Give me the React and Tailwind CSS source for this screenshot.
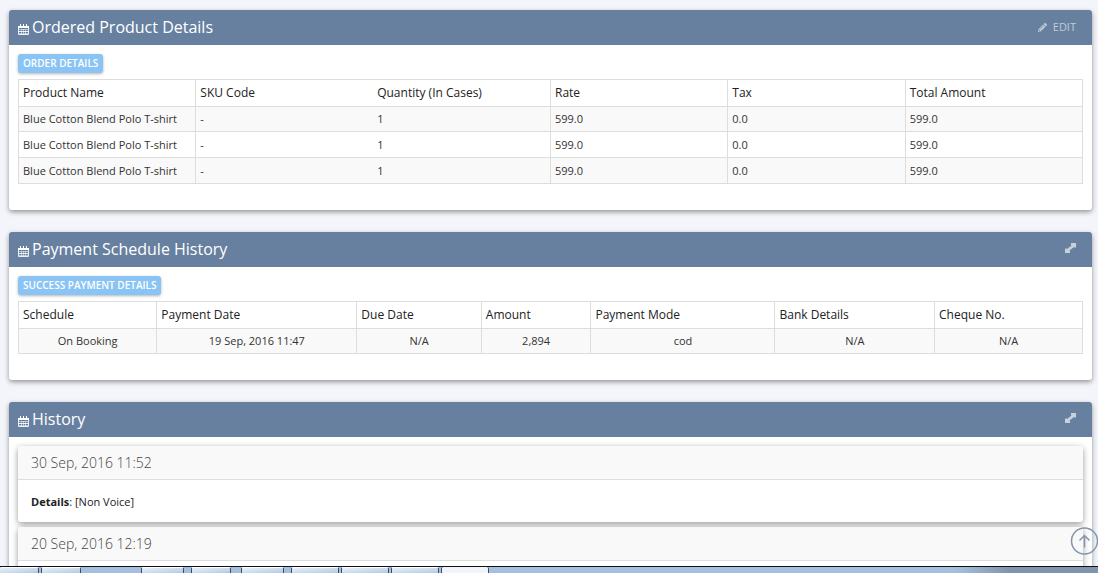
import { FaPencilAlt } from "react-icons/fa";

const orderColumns = ["Product Name", "SKU Code", "Quantity (In Cases)", "Rate", "Tax", "Total Amount"];

const orders = [
    ["Blue Cotton Blend Polo T-shirt", "-", "1", "599.0", "0.0", "599.0"],
    ["Blue Cotton Blend Polo T-shirt", "-", "1", "599.0", "0.0", "599.0"],
    ["Blue Cotton Blend Polo T-shirt", "-", "1", "599.0", "0.0", "599.0"],
];

const paymentColumns = [
    { name: "Schedule", width: "w-[13%]" },
    { name: "Payment Date", width: "w-[18.8%]" },
    { name: "Due Date", width: "w-[11.7%]" },
    { name: "Amount", width: "w-[10.3%]" },
    { name: "Payment Mode", width: "w-[17.3%]" },
    { name: "Bank Details", width: "w-[15%]" },
    { name: "Cheque No.", width: "w-[13.9%]" },
];

const payments = [["On Booking", "19 Sep, 2016 11:47", "N/A", "2,894", "cod", "N/A", "N/A"]];

const windowTabs = [
    "w-[39px] mr-[2px]",
    "w-[40px] mr-[60px]",
    "w-[43px] mr-[7px]",
    "w-[40px] mr-[10px]",
    "w-[43px] mr-[7px]",
    "w-[48px] mr-[2px]",
    "w-[48px] mr-[2px]",
    "w-[48px] mr-[2px]",
];

const CalendarIcon = () => (
    <svg className="h-[11px] w-[11px] shrink-0" viewBox="0 0 11 11" aria-hidden="true">
        <path fill="#fff" d="M0 2h11v2H0z" />
        <path fill="#fff" d="M2 0h1v3H2zM5 0h1v3H5zM8 0h1v3H8z" />
        <path fill="none" stroke="#fff" strokeOpacity=".85" d="M.5 4v6.500h10V4M0 7.500h11" />
        <path fill="none" stroke="#fff" strokeOpacity=".5" d="M3.500 5v6M5.500 5v6M7.500 5v6M1 5.500h9M1 9.500h9" />
    </svg>
)

const ExpandIcon = () => (
    <svg className="h-[10px] w-[11px]" viewBox="0 0 11 10" fill="currentColor" aria-hidden="true">
        <path d="M6 0h5v4.500H9.500L9 4 4.500 7.500l.5.5v2H0V5.500h1.500L2 6l4.500-3.500L6 2z" />
    </svg>
)

const Card = ({ title, action, children }) => (
    <section className="shrink-0 rounded-[3px] bg-white shadow-[0_2px_5px_rgba(0,0,0,0.4)]">
        <header className="flex h-[35px] items-center justify-between rounded-t-[3px] bg-[#67809f] pr-4 pl-[9px] text-white">
            <div className="flex items-center gap-[3px] pb-[2px]">
                <span className="pt-[5px]"><CalendarIcon /></span>
                <h2 className="text-[16px] leading-6">{title}</h2>
            </div>
            {action}
        </header>
        {children}
    </section>
)

const ExpandButton = ({ label }) => (
    <button type="button" aria-label={label} className="pb-[3px] text-[#c8d0da]">
        <ExpandIcon />
    </button>
)

const Label = ({ children }) => (
    <span className="mb-[6px] flex h-[19px] w-fit items-center rounded-[3px] bg-[#89c4f4] px-[5px] text-[10px] font-semibold text-white shadow-[0_1px_3px_rgba(0,0,0,0.3)]">
        {children}
    </span>
)

const headRow = "h-[27px] text-left text-[12px] leading-4 text-[#222]";
const bodyRow = "h-[26px] first:h-[25px] odd:bg-[#f9f9f9]";

const orderCell = (i) => {
    if (i === 1) return "border-y border-[#ddd] px-1";
    if (i === 2) return "border-y border-r border-[#ddd] px-1";
    return "border border-[#ddd] px-1";
}

const OrderTable = () => (
    <table className="w-full table-fixed border-collapse border border-[#ddd] text-[11px] leading-4 text-[#333]">
        <thead>
            <tr className={headRow}>
                {orderColumns.map((name, i) => (
                    <th key={name} className={`${orderCell(i)} font-medium`}>{name}</th>
                ))}
            </tr>
        </thead>
        <tbody>
            {orders.map((order, i) => (
                <tr key={i} className={bodyRow}>
                    {order.map((value, j) => (
                        <td key={j} className={orderCell(j)}>{value}</td>
                    ))}
                </tr>
            ))}
        </tbody>
    </table>
)

const PaymentTable = () => (
    <table className="w-full table-fixed border-collapse border border-[#ddd] text-[11px] leading-4 text-[#333]">
        <colgroup>
            {paymentColumns.map(({ name, width }) => <col key={name} className={width} />)}
        </colgroup>
        <thead>
            <tr className={headRow}>
                {paymentColumns.map(({ name }) => (
                    <th key={name} className="border border-[#ddd] px-1 font-medium">{name}</th>
                ))}
            </tr>
        </thead>
        <tbody>
            {payments.map((payment, i) => (
                <tr key={i} className={bodyRow}>
                    {payment.map((value, j) => (
                        <td key={j} className="border border-[#ddd] px-1 text-center">{value}</td>
                    ))}
                </tr>
            ))}
        </tbody>
    </table>
)

const HistoryEntry = ({ date, children }) => (
    <article className="rounded-[3px] bg-white shadow-[0_2px_6px_rgba(0,0,0,0.4)]">
        <h3 className="flex h-[34px] items-center rounded-t-[3px] border-b border-[#ddd] bg-[#f9f9f9] px-[13px] text-[14px] font-light text-[#444]">
            {date}
        </h3>
        <div className="px-[13px] pt-[14px] pb-[12px] text-[11px] leading-4 text-[#222]">{children}</div>
    </article>
)

const Taskbar = () => (
    <div className="flex h-[7px] shrink-0 border-t border-[#111] bg-linear-to-r from-[#a5c0de] from-87% to-[#8095ad] to-92%">
        {windowTabs.map((size, i) => (
            <span key={i} className={`${size} rounded-t-[2px] border-x border-t border-x-[#3b4c60] border-t-white bg-linear-to-br from-[#eaf1f8] to-[#b2cae3] first:border-l-0`}></span>
        ))}
        <span className="w-[48px] rounded-t-[2px] border-x border-x-[#3b4c60] bg-[#f1f4f8]"></span>
    </div>
)

const App = () => {

    return (
        <div className="flex h-screen flex-col bg-[#f3f5fa] font-['Open_Sans','Noto_Sans',sans-serif]">
            <main className="flex min-h-0 flex-1 flex-col gap-[22px] overflow-hidden pt-[10px] pr-[6px] pl-[9px]">

                <Card
                    title="Ordered Product Details"
                    action={
                        <button type="button" className="flex items-center gap-[6px] text-[11px] text-[#c0cad6]">
                            <FaPencilAlt className="h-[9px] w-[9px]" />
                            EDIT
                        </button>
                    }
                >
                    <div className="px-[9px] pt-[9px] pb-[26px]">
                        <Label>ORDER DETAILS</Label>
                        <OrderTable />
                    </div>
                </Card>

                <Card title="Payment Schedule History" action={<ExpandButton label="Expand payments" />}>
                    <div className="px-[9px] pt-[9px] pb-[26px]">
                        <Label>SUCCESS PAYMENT DETAILS</Label>
                        <PaymentTable />
                    </div>
                </Card>

                <Card title="History" action={<ExpandButton label="Expand history" />}>
                    <div className="flex flex-col gap-[5px] px-[9px] pt-[9px] pb-[26px]">
                        <HistoryEntry date="30 Sep, 2016 11:52">
                            <b>Details</b>: [Non Voice]
                        </HistoryEntry>
                        <HistoryEntry date="20 Sep, 2016 12:19" />
                    </div>
                </Card>

            </main>

            <Taskbar />

            {/* scroll to top */}
            <button type="button" aria-label="Back to top" className="fixed right-0 bottom-[18px] text-[#8496ad]">
                <svg className="h-7 w-7" viewBox="0 0 28 28" fill="none" stroke="currentColor" strokeWidth="1.500">
                    <circle cx="14.500" cy="14" r="13" />
                    <path d="M14.500 20.500V8.500M9.500 13.500l5-5 5 5" />
                </svg>
            </button>
        </div>
    )

}

export default App;
